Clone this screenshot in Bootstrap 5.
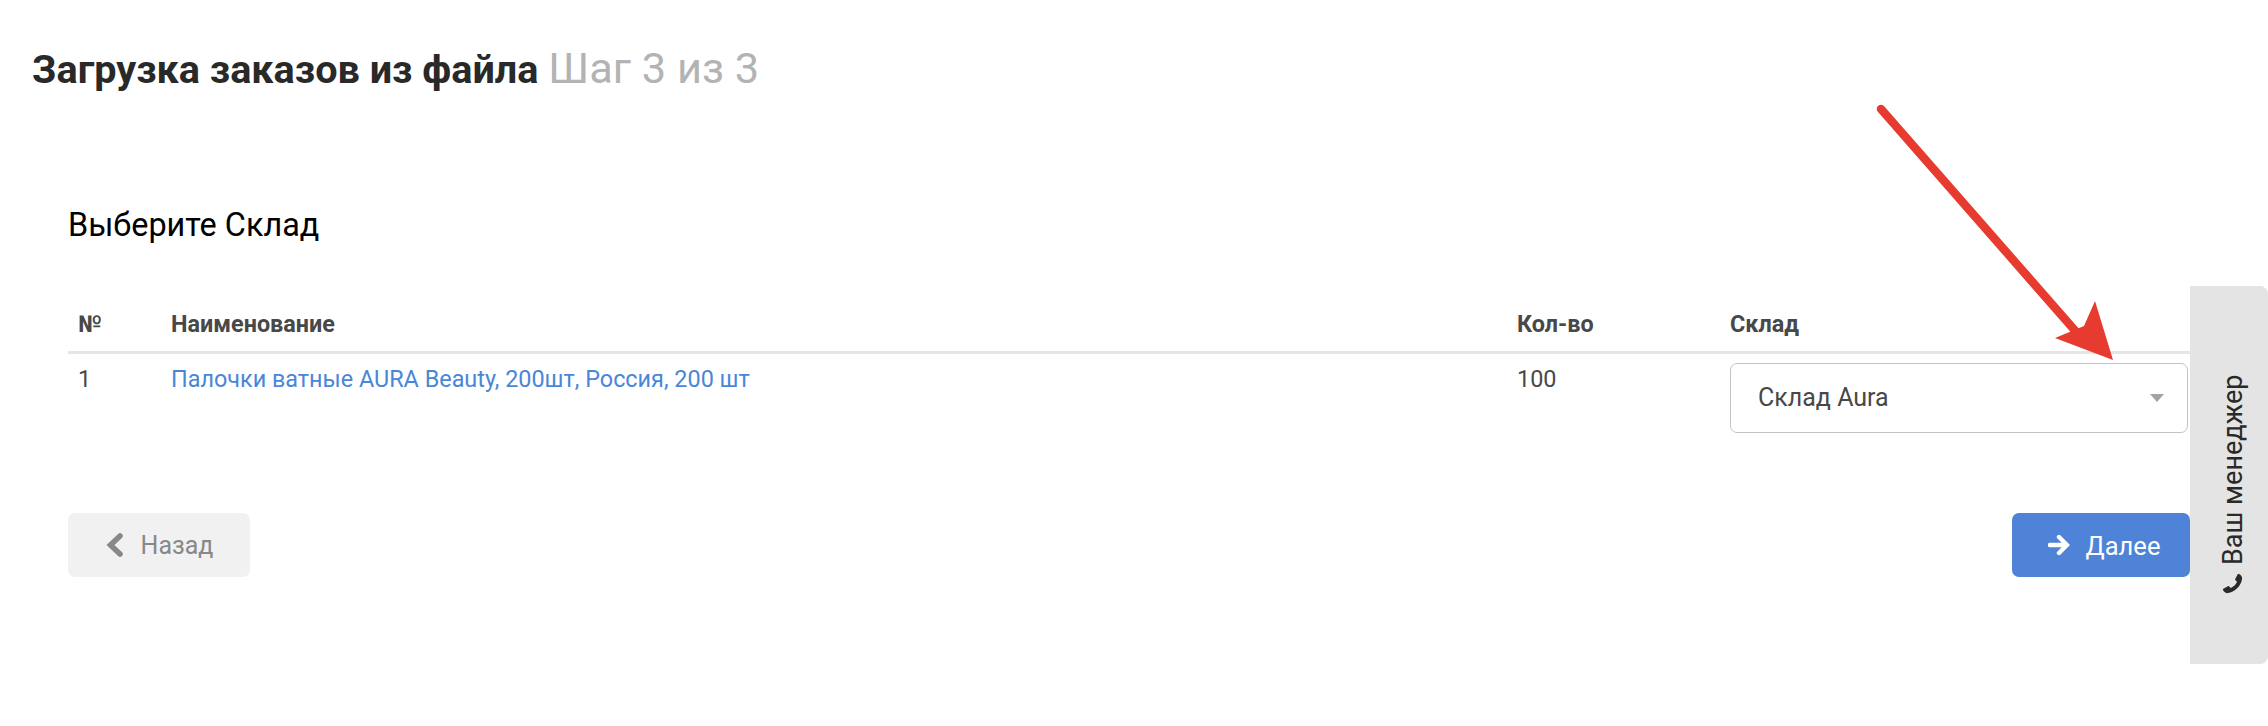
<!DOCTYPE html>
<html lang="ru">
<head>
<meta charset="utf-8">
<title>Загрузка заказов из файла</title>
<link href="https://cdn.jsdelivr.net/npm/bootstrap@5.3.0/dist/css/bootstrap.min.css" rel="stylesheet">
<style>
html,body{height:726px;overflow:hidden}
body{font-family:Roboto,"Liberation Sans",sans-serif;background:#fff;color:#484848;position:relative}
.page-title{font-size:39.6px;font-weight:700;color:#292929;margin:0;padding:46px 32px 0;line-height:46px}
.page-title span{font-weight:400;color:#b3b3b3;font-size:43.4px}
.work-area{padding:0 78px 0 68px}
.sub-title{font-size:32.4px;font-weight:400;color:#000;margin:0;padding-top:109px;line-height:46px}
.order-table{margin:54px 0 0;font-size:23.4px;color:#484848;--bs-table-color:#484848}
.order-table>thead>tr>th{font-weight:700;padding:0 10px 11px;height:50px;vertical-align:bottom;line-height:32px;border-bottom:3px solid #e6e6e6}
.order-table>tbody>tr>td{padding:9px 10px 0;border:0;line-height:32px;vertical-align:top}
.order-table>*>*>*:last-child{padding-right:2px;padding-left:0}
.order-table a{color:#4a86d8;text-decoration:none}
.col-num{width:93px}.col-qty{width:223px}.col-stock{width:460px}
.stock-select.form-select{height:70px;font-size:25px;color:#484848;border:1px solid #c4c4c4;border-radius:7px;padding:0 40px 0 27px;background-image:url("data:image/svg+xml,%3Csvg xmlns='http://www.w3.org/2000/svg' viewBox='0 0 14 8'%3E%3Cpath fill='%23a3a3a3' d='M0 0h14L7 8z'/%3E%3C/svg%3E");background-size:14px 8px;background-position:right 23px center;margin-top:0}
.action-row{margin-top:80px}
.step-btn{height:64px;font-size:25px;border:0;border-radius:7px;display:flex;align-items:center;gap:16px;padding-top:9px}
.step-back{width:182px;background:#f1f1f1;color:#888;justify-content:center;gap:16px}
.step-next{width:178px;background:#4e83d7;color:#fff;justify-content:center;padding-left:18px;font-size:25.500px}
.step-back svg,.step-next svg{margin-top:-3px}
.step-back:hover{background:#f1f1f1;color:#888}.step-next:hover{background:#4e83d7;color:#fff}
.manager-tab{position:absolute;left:2190px;top:286px;width:78px;height:378px;background:#e4e4e4;border-radius:8px 0 0 8px;writing-mode:vertical-rl;transform:rotate(180deg);display:flex;flex-direction:row;align-items:center;justify-content:flex-start;gap:6px;padding-top:68px;padding-right:8px;font-size:27px;color:#292929;line-height:1}
.red-arrow{position:absolute;left:0;top:0;width:2268px;height:726px;pointer-events:none}
</style>
</head>
<body>
<h1 class="page-title">Загрузка заказов из файла <span>Шаг 3 из 3</span></h1>
<div class="work-area">
  <h2 class="sub-title">Выберите Склад</h2>
  <table class="table order-table">
    <thead>
      <tr><th class="col-num">№</th><th>Наименование</th><th class="col-qty">Кол-во</th><th class="col-stock">Склад</th></tr>
    </thead>
    <tbody>
      <tr>
        <td>1</td>
        <td><a href="#">Палочки ватные AURA Beauty, 200шт, Россия, 200 шт</a></td>
        <td>100</td>
        <td><select class="form-select stock-select"><option>Склад Aura</option></select></td>
      </tr>
    </tbody>
  </table>
  <div class="d-flex justify-content-between action-row">
    <button class="btn step-btn step-back" type="button">
      <svg width="20" height="26" viewBox="0 0 20 26"><path d="M15 4 5.500 13l9.500 9" fill="none" stroke="#888" stroke-width="5.500" stroke-linecap="round" stroke-linejoin="miter"/></svg>Назад
    </button>
    <button class="btn step-btn step-next" type="button">
      <svg width="22" height="22" viewBox="0 0 22 22"><path d="M2 11h16M11 3l8 8-8 8" fill="none" stroke="#fff" stroke-width="4.400" stroke-linecap="round" stroke-linejoin="miter"/></svg>Далее
    </button>
  </div>
</div>
<div class="manager-tab">
  <svg width="25" height="25" viewBox="0 0 24 24"><path transform="rotate(90 12 12)" fill="#292929" d="M7 3.200 9.400 7.600c.2.400.1.900-.2 1.200L7.600 10.400c1.300 2.700 3.300 4.700 6 6l1.600-1.600c.3-.3.8-.4 1.200-.2l4.400 2.400c.4.200.6.700.4 1.100-.7 2-2.600 3.400-4.600 3.100C9.900 20.500 3.500 14.100 2.800 7.400 2.500 5.400 3.900 3.500 5.900 2.800c.4-.2.900 0 1.100.4z"/></svg>
  <span>Ваш менеджер</span>
</div>
<svg class="red-arrow" viewBox="0 0 2268 726">
  <path d="M1881 109 2078 334" stroke="#e63b2e" stroke-width="8.500" stroke-linecap="round" fill="none"/>
  <path d="M2095 301 2113 360 2055 338 2084 326z" fill="#e63b2e"/>
</svg>
</body>
</html>
